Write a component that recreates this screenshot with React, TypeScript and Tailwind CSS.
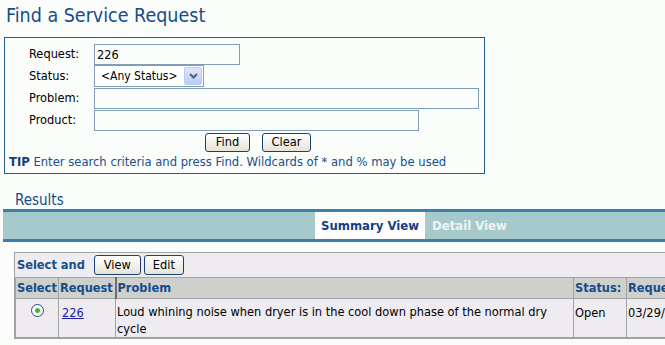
import React from 'react';

const font = { fontFamily: '"DejaVu Sans Condensed", "DejaVu Sans", sans-serif' };

const XpButton: React.FC<{ label: string; className?: string }> = ({ label, className }) => (
  <button
    className={`h-[19px] rounded-[3px] border border-[#1c3f73] bg-gradient-to-b from-white to-[#e6e3d6] text-[12.7px] leading-none text-black ${className ?? ''}`}
  >
    {label}
  </button>
);

const Field: React.FC<{ label: string; width: string }> = ({ label, width }) => (
  <>
    <div className="flex h-[22px] items-center text-[12.7px] text-black">{label}</div>
    <div className="flex h-[22px] items-center">
      <input className={`h-[21px] ${width} border border-[#7f9db9] bg-[#fbfdfb] px-[2px] text-[12.7px] text-black outline-none`} defaultValue={label === 'Request:' ? '226' : ''} />
    </div>
  </>
);

export default function App() {
  return (
    <div className="h-[345px] w-[665px] overflow-hidden bg-[#fbfdfb]" style={font}>
      <h1 className="ml-[6px] pt-[5px] text-[19.5px] leading-[22px] text-[#154c8a]">Find a Service Request</h1>

      <div className="ml-[4px] mt-[10px] h-[137px] w-[481px] border border-[#20608c] pt-[5px]">
        <div className="grid grid-cols-[65px_1fr] pl-[24px]">
          <Field label="Request:" width="w-[146px]" />
          <div className="flex h-[22px] items-center text-[12.7px] text-black">Status:</div>
          <div className="flex h-[22px] items-center">
            <div className="flex h-[22px] w-[110px] items-center border border-[#7f9db9] bg-white pl-[6px] text-[12px]">
              <span className="flex-1">&lt;Any Status&gt;</span>
              <span className="mr-[1px] flex h-[18px] w-[18px] items-center justify-center rounded-[2px] border border-[#bccbf0] bg-gradient-to-b from-[#dfe8fc] to-[#b9cbf5]">
                <svg width="9" height="6" viewBox="0 0 9 6">
                  <path d="M1 1 L4.5 4.5 L8 1" stroke="#4d6185" strokeWidth="2" fill="none" />
                </svg>
              </span>
            </div>
          </div>
          <Field label="Problem:" width="w-[385px]" />
          <Field label="Product:" width="w-[325px]" />
        </div>
        <div className="mt-[2px] flex gap-[12px] pl-[200px]">
          <XpButton label="Find" className="w-[45px]" />
          <XpButton label="Clear" className="w-[49px]" />
        </div>
        <div className="mt-[2px] pl-[4px] text-[12.9px] leading-[16px] text-[#1a4f8b]">
          <span className="font-bold text-[#123f77]">TIP</span> Enter search criteria and press Find. Wildcards of * and % may be used
        </div>
      </div>

      <div className="ml-[15px] mt-[17px] text-[15px] leading-[18px] text-[#154c8a]">Results</div>

      <div className="ml-[3px] flex h-[33px] border-y-[3px] border-[#3b80ac] bg-[#a6cacb]">
        <div className="w-[312px]" />
        <div className="flex w-[110px] items-center justify-center bg-white text-[13px] font-bold text-[#133f7e]">Summary View</div>
        <div className="flex items-center pl-[7px] text-[13px] font-bold text-[#edf4f4]">Detail View</div>
      </div>

      <div className="ml-[14px] mt-[10px] w-[700px] border border-[#a3a3a3] bg-[#eeecf0]">
        <div className="flex h-[24px] items-center gap-[3px] pl-[2px]">
          <span className="mr-[6px] text-[12.7px] font-bold text-[#154c8a]">Select and</span>
          <XpButton label="View" className="h-[20px] w-[47px]" />
          <XpButton label="Edit" className="h-[20px] w-[40px]" />
        </div>
        <table className="w-[700px] border-collapse text-[12.7px]">
          <thead>
            <tr className="h-[21px] bg-[#cdd0cd] text-left font-bold text-[#154c8a]">
              <th className="w-[43px] border border-[#a3a3a3] px-[1px] font-bold">Select</th>
              <th className="w-[57px] border border-[#a3a3a3] px-[1px] font-bold">Request</th>
              <th className="w-[458px] border border-[#a3a3a3] border-l-2 border-l-[#6e6e6e] px-[1px] font-bold">Problem</th>
              <th className="w-[53px] border border-[#a3a3a3] px-[1px] font-bold">Status:</th>
              <th className="border border-[#a3a3a3] px-[1px] font-bold">Requested</th>
            </tr>
          </thead>
          <tbody>
            <tr className="h-[38px] align-top text-black">
              <td className="border border-[#a3a3a3] pt-[5px]">
                <div className="flex justify-center">
                  <span className="flex h-[13px] w-[13px] items-center justify-center rounded-full border border-[#1c5180] bg-white">
                    <span className="h-[5px] w-[5px] rounded-full bg-[#3fb83f]" />
                  </span>
                </div>
              </td>
              <td className="border border-[#a3a3a3] px-[3px] pt-[4px]">
                <a href="#" className="text-[#1c1ca8] underline">226</a>
              </td>
              <td className="border border-[#a3a3a3] px-[1px] pt-[4px] leading-[17px]">
                Loud whining noise when dryer is in the cool down phase of the normal dry cycle
              </td>
              <td className="border border-[#a3a3a3] px-[1px] pt-[4px]">Open</td>
              <td className="border border-[#a3a3a3] px-[1px] pt-[4px]">03/29/2006</td>
            </tr>
          </tbody>
        </table>
      </div>
    </div>
  );
}
